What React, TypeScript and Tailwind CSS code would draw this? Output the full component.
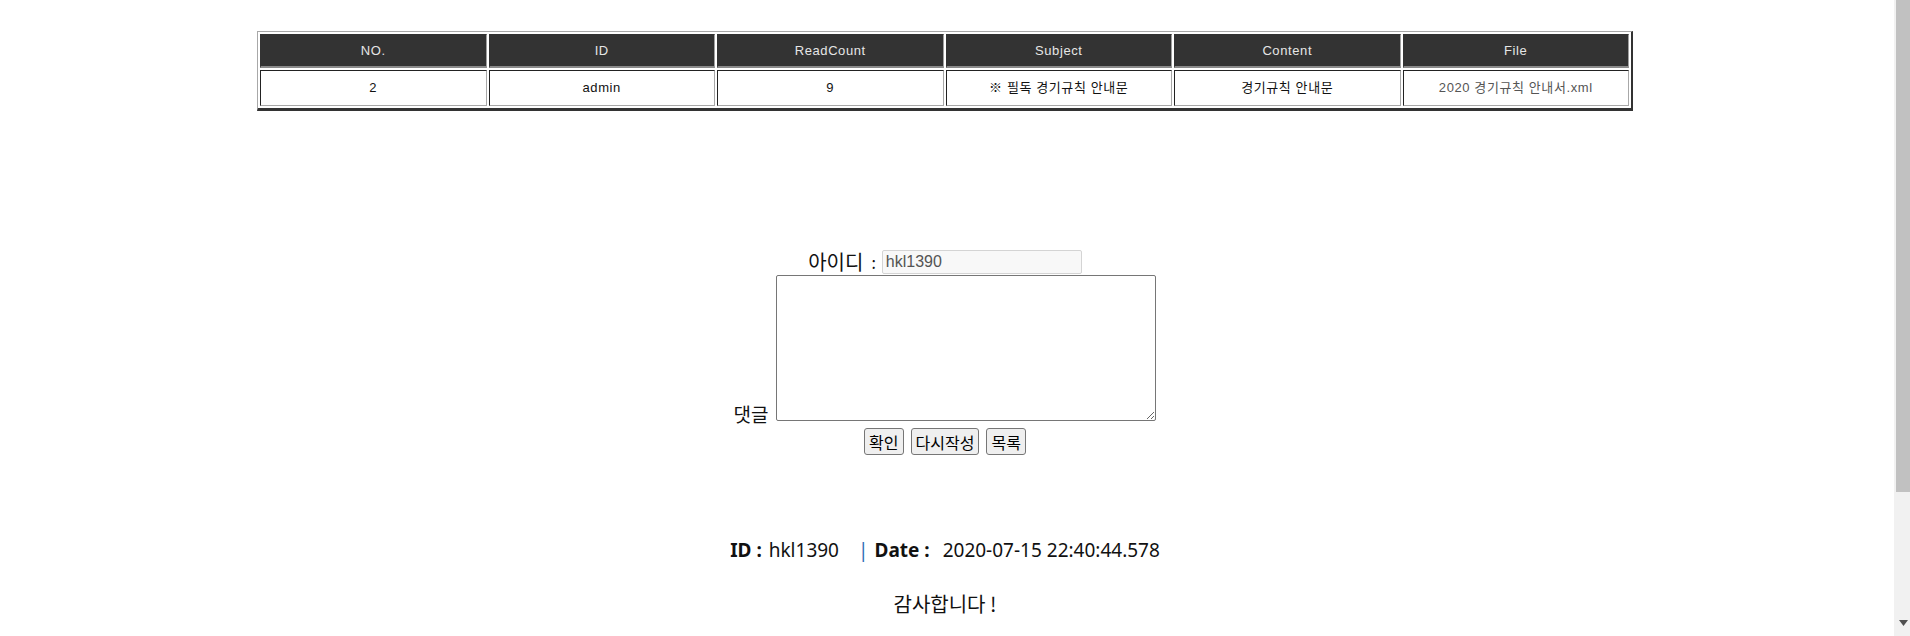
const headers = ["NO.", "ID", "ReadCount", "Subject", "Content", "File"];

const row = [
  { text: "2", color: "text-[#111111]" },
  { text: "admin", color: "text-[#111111]" },
  { text: "9", color: "text-[#111111]" },
  { text: "※ 필독 경기규칙 안내문", color: "text-[#111111]" },
  { text: "경기규칙 안내문", color: "text-[#111111]" },
  { text: "2020 경기규칙 안내서.xml", color: "text-[#555555]" },
];

function BoardTable() {
  return (
    <table className="mx-auto w-[1376px] table-fixed border-separate border-spacing-[2px] border border-[#a8a8a8] border-r-2 border-r-[#333333] border-b-[3px] border-b-[#333333] font-['Liberation_Sans','Noto_Sans_CJK_KR',sans-serif] text-[13px] tracking-[0.6px]">
      <thead>
        <tr>
          {headers.map((h) => (
            <th
              key={h}
              className="h-[34px] p-0 bg-[#333333] border border-[#333333] border-r-[#a0a0a0] border-b-2 border-b-[#8a8a8a] font-normal text-[#e6e6e6] text-center"
            >
              {h}
            </th>
          ))}
        </tr>
      </thead>
      <tbody>
        <tr>
          {row.map((c, i) => (
            <td
              key={i}
              className={`h-[36px] p-0 bg-white border border-[#222222] border-r-[#a8a8a8] border-b-[#a8a8a8] font-normal text-center ${c.color}`}
            >
              {c.text}
            </td>
          ))}
        </tr>
      </tbody>
    </table>
  );
}

function ReplyForm() {
  return (
    <div className="mt-[139px] flex flex-col items-center font-['Noto_Sans_CJK_KR',sans-serif] text-[#111111]">
      {/* 아이디 */}
      <div className="flex items-center h-[24px]">
        <span className="text-[20px] leading-none">아이디</span>
        <span className="ml-[8px] text-[16px] leading-none">:</span>
        <input
          readOnly
          value="hkl1390"
          className="ml-[6px] w-[200px] h-[24px] px-[3px] bg-[#f8f8f8] border border-[#d4d4d4] rounded-[2px] text-[16px] text-[#545454] font-['Liberation_Sans',sans-serif] outline-none"
        />
      </div>

      {/* 댓글 */}
      <div className="flex items-end mt-[1px]">
        <span className="text-[19px] leading-none mr-[8px] mb-[-2px]">댓글</span>
        <textarea className="w-[380px] h-[146px] bg-white border border-[#767676] rounded-[2px] outline-none" />
      </div>

      {/* buttons */}
      <div className="flex gap-[7px] mt-[7px]">
        {["확인", "다시작성", "목록"].map((b) => (
          <button
            key={b}
            className="h-[27px] px-[4px] bg-[#efefef] border border-[#767676] rounded-[3px] text-[16px] leading-none text-black"
          >
            {b}
          </button>
        ))}
      </div>
    </div>
  );
}

function ReplyInfo() {
  return (
    <div className="flex flex-col items-center text-[#111111]">
      <div className="mt-[82px] h-[26px] leading-[26px] text-[19px] font-['Noto_Sans',sans-serif] flex whitespace-pre">
        <span className="font-bold">ID :</span>
        <span className="ml-[7px]">hkl1390</span>
        <span className="ml-[19px] text-[#2f6fb3]">|</span>
        <span className="ml-[6px] font-bold">Date :</span>
        <span className="ml-[13px]">2020-07-15 22:40:44.578</span>
      </div>
      <div className="mt-[28px] h-[26px] leading-[26px] text-[20px] font-['Noto_Sans_CJK_KR',sans-serif]">
        감사합니다 !
      </div>
    </div>
  );
}

function Scrollbar() {
  return (
    <div className="w-[16px] h-full bg-[#f1f1f1] flex flex-col">
      <div className="ml-[2px] h-[492px] bg-[#c1c1c1]" />
      <div className="flex-1" />
      <div className="flex justify-center pl-[2px] mb-[10px]">
        <svg width="9" height="6" viewBox="0 0 9 6">
          <path d="M0 0 L9 0 L4.5 6 Z" fill="#505050" />
        </svg>
      </div>
    </div>
  );
}

export default function App() {
  return (
    <div className="flex w-full h-[636px] overflow-hidden bg-white">
      <div className="flex-1 pr-[4px]">
        <div className="pt-[31px]">
          <BoardTable />
        </div>
        <ReplyForm />
        <ReplyInfo />
      </div>
      <Scrollbar />
    </div>
  );
}
